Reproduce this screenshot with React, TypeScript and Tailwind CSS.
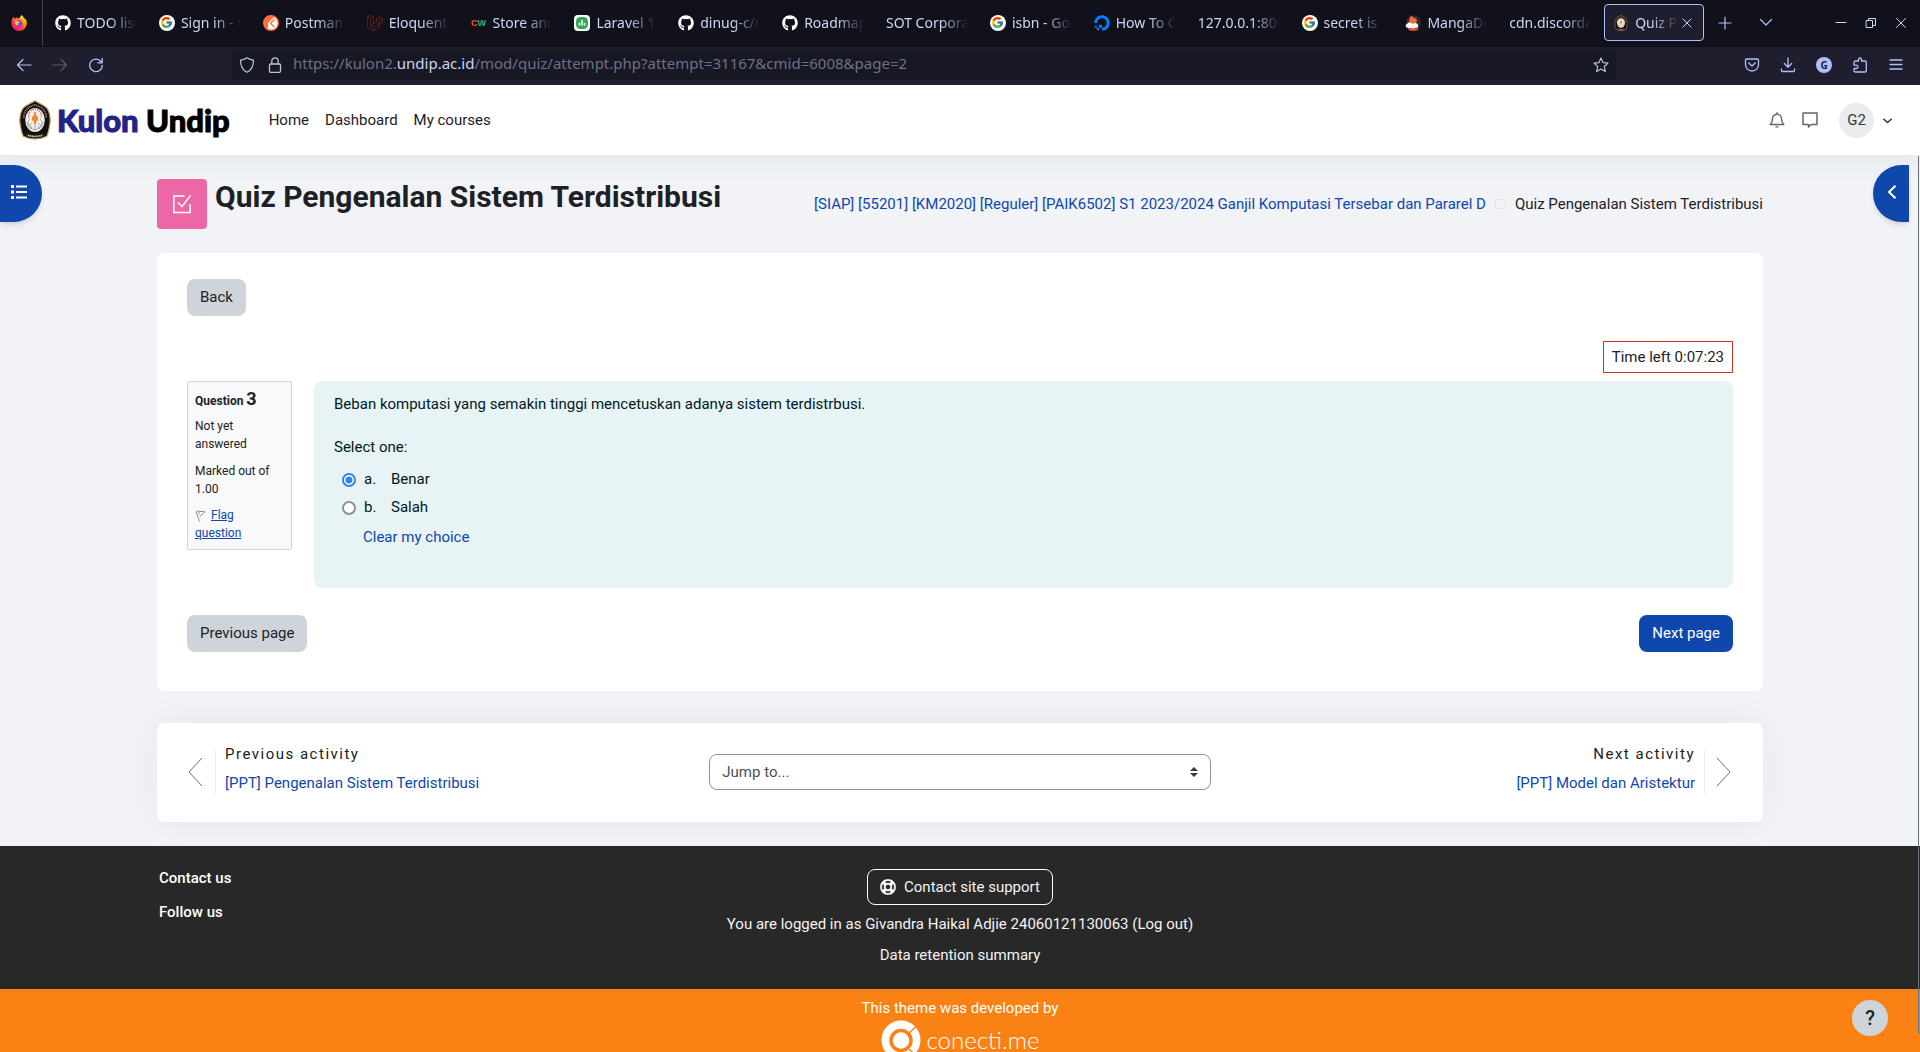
import { useState, type ReactNode } from "react";
import { FaGithub, FaLaravel, FaDigitalOcean, FaRegLifeRing } from "react-icons/fa";
import { FcGoogle } from "react-icons/fc";

/* ---------- browser icons ---------- */

function Stroke({ size, width = 1, children }: { size: number; width?: number; children: ReactNode }) {
  return (
    <svg
      aria-hidden="true"
      width={size}
      height={size}
      viewBox="0 0 16 16"
      fill="none"
      stroke="currentColor"
      strokeWidth={width}
      strokeLinecap="round"
      strokeLinejoin="round"
    >
      {children}
    </svg>
  );
}

function FirefoxIcon() {
  return (
    <svg aria-hidden="true" width="16" height="16" viewBox="0 0 16 16">
      <defs>
        <linearGradient id="fox" x1="0.9" y1="0.05" x2="0.2" y2="0.95">
          <stop offset="0" stopColor="#fff44f" />
          <stop offset="0.35" stopColor="#ff980e" />
          <stop offset="0.7" stopColor="#ff3647" />
          <stop offset="1" stopColor="#e31587" />
        </linearGradient>
      </defs>
      <path
        fill="url(#fox)"
        d="M15.4 5.4c-.4-.8-1-1.7-1.6-2 .4.8.6 1.500.7 2C13.600 3 12 2 10.800.1c-1.400.8-1.900 2.200-2 3-.8 0-1.600.3-2.200.7-.4-.3-.5-1.200-.2-1.700-.8.4-1.400 1-1.800 1.500-.5-.1-.8 0-1 0C3.300 3.200 3 2.500 3 1.800 1.700 2.700.3 5 .3 8.300A7.700 7.700 0 0 0 8 16a7.700 7.700 0 0 0 7.700-6.500c.2-1.400.1-2.900-.3-4.100z"
      />
      <circle cx="7.900" cy="8.500" r="3.300" fill="#7542e5" />
      <path fill="#ffbd4f" d="M3.500 6.200c1.200-.7 3-.5 4 .3 1 .1 1.500.3 1.500.7-.1.500-1.500.7-1.900 1.300-.3.600.2 1.300 1 1.500-1.300.8-3.300.2-4.100-1.200-.4-.8-.6-1.700-.5-2.600z" />
    </svg>
  );
}

function GoogleIcon() {
  return (
    <span className="flex size-4 items-center justify-center rounded-full bg-white">
      <FcGoogle size={13} aria-hidden="true" />
    </span>
  );
}

function PostmanDocIcon() {
  return (
    <svg aria-hidden="true" width="16" height="16" viewBox="0 0 16 16">
      <circle cx="8" cy="8" r="7.300" fill="#fff" stroke="#ff6c37" strokeWidth="1.400" />
      <path d="M11.500 1.500A7 7 0 0 0 1.200 8a6.500 6.500 0 0 0 4 6L5 8z" fill="#ff6c37" />
      <path d="M11.500 4L7.500 8.200l4 4" fill="none" stroke="#ff6c37" strokeWidth="1.300" />
    </svg>
  );
}

function CodeWallIcon() {
  return (
    <span aria-hidden="true" className="flex w-4 justify-center font-['Liberation_Sans'] text-[9px] leading-4 font-bold">
      <span className="text-[#ff4b2b]">C</span>
      <span className="text-[#1fb57a]">W</span>
    </span>
  );
}

function ChartIcon() {
  return (
    <svg aria-hidden="true" width="16" height="16" viewBox="0 0 16 16">
      <rect width="16" height="16" rx="4" fill="#fff" />
      <rect x="2" y="2" width="12" height="12" rx="4.500" fill="#34a853" />
      <path d="M5.500 10.500V7.500M8 10.500V5M10.500 10.500V8" stroke="#fff" strokeWidth="1.500" />
    </svg>
  );
}

function MangaIcon() {
  return (
    <svg aria-hidden="true" width="16" height="16" viewBox="0 0 16 16">
      <circle cx="8.500" cy="7.500" r="7.300" fill="#2c2f33" />
      <path d="M4 7.500c0-2 .8-4.500 2-6.500 1 .2 1.700.8 2.500 1.500 1.500.3 3 1.500 3.500 3l-1.500 3-5 .5z" fill="#ff6740" />
      <path d="M.5 10.500c.8-1.500 2.500-2 3.500-3.200 2 1.500 5.500 1.400 7 .7 1.800 1 2.500 2.300 2 4.300l-5 1.700-6.500-1.500z" fill="#fff" />
      <path d="M2 12.500c3 1.200 8 1 12 .5l-2 2.500c-3 .6-6 .5-8-.3z" fill="#e6502f" />
    </svg>
  );
}

/* University crest: gold-edged dark shield around a pale medallion. */
function Crest({ className }: { className: string }) {
  return (
    <svg aria-hidden="true" className={className} viewBox="0 0 32 40">
      <path
        d="M16 .7C20 3.500 25 4.500 28.500 9c3 5 3.300 11 2 17.500-.6 3.600-1.500 7-2.700 9.700-7 3.700-16.600 3.700-23.600 0-1.200-2.700-2.100-6.100-2.700-9.700C.2 20 .5 14 3.500 9 7 4.500 12 3.500 16 .7z"
        fill="#14110c"
        stroke="#c9a25d"
        strokeWidth="1.200"
      />
      <path d="M4.800 18c0-7 4-11.500 11.200-13 7.200 1.500 11.200 6 11.200 13" fill="none" stroke="#9b9488" strokeWidth="1.800" strokeDasharray="1 .8" />
      <ellipse cx="16" cy="20" rx="9.800" ry="12" fill="#f1efec" />
      <path
        d="M16 21v10M11 19c-3 3-2.500 7 1 9M21 19c3 3 2.500 7-1 9M8 22c1 4.500 4 7.500 8 7.500s7-3 8-7.500M13 23l-3 3M19 23l3 3M13 26l-1.500 3M19 26l1.500 3"
        fill="none"
        stroke="#9a9690"
        strokeWidth=".8"
      />
      <path d="M10 17.500a6.300 6.300 0 1 1 12 0" fill="none" stroke="#ec5a34" strokeWidth="1.300" strokeDasharray="1.300 1" />
      <path d="M16 11.500c1.400 1 1.500 2.300.8 3.500 2.200 1 2.700 3.500 2.200 5.500l-1.500.5-.7 3h-1.600l-.7-3-1.500-.5c-.5-2 0-4.500 2.200-5.500-.7-1.200-.6-2.500.8-3.500z" fill="#ef8a2b" />
      <path d="M6.500 33c6 2.500 13 2.500 19 0l-.8 3c-5.500 2-11.900 2-17.400 0z" fill="#2b2822" />
      <path d="M9 35.300c4.500 1.500 9.500 1.500 14 0" fill="none" stroke="#d8d4cb" strokeWidth="1.500" strokeDasharray="1.300 .6" />
    </svg>
  );
}

/* ---------- browser chrome ---------- */

const github = <FaGithub size={16} className="text-white" aria-hidden="true" />;

const tabs: { title: string; icon?: ReactNode; active?: boolean }[] = [
  { title: "TODO list", icon: github },
  { title: "Sign in - Google", icon: <GoogleIcon /> },
  { title: "Postman", icon: <PostmanDocIcon /> },
  { title: "Eloquent: Getting", icon: <FaLaravel size={16} className="text-[#a3211b]" aria-hidden="true" /> },
  { title: "Store and", icon: <CodeWallIcon /> },
  { title: "Laravel 10", icon: <ChartIcon /> },
  { title: "dinug-c/note", icon: github },
  { title: "Roadmap", icon: github },
  { title: "SOT Corporate" },
  { title: "isbn - Google", icon: <GoogleIcon /> },
  { title: "How To Create", icon: <FaDigitalOcean size={16} className="text-[#0080ff]" aria-hidden="true" /> },
  { title: "127.0.0.1:8000" },
  { title: "secret is not", icon: <GoogleIcon /> },
  { title: "MangaDex", icon: <MangaIcon /> },
  { title: "cdn.discordapp" },
  { title: "Quiz Pengenalan", icon: <Crest className="h-4 w-4" />, active: true },
];

function IconButton({ label, className, children }: { label: string; className: string; children: ReactNode }) {
  return (
    <button type="button" aria-label={label} className={`flex h-full shrink-0 items-center justify-center ${className}`}>
      {children}
    </button>
  );
}

function TabBar() {
  return (
    <div className="flex h-[46px] shrink-0 items-center bg-[#11111b] text-sm text-[#cdd6f4]">
      <IconButton label="Firefox View" className="mr-px w-[43px] border-r border-[#3d3e4c] pr-1">
        <FirefoxIcon />
      </IconButton>
      <div className="flex min-w-0 flex-1 pb-px">
        {tabs.map((tab) => (
          <div key={tab.title} className="min-w-0 flex-1 px-0.5">
            <div
              className={`flex h-[37px] items-center rounded border ${
                tab.active ? "border-[#b4befe] bg-[#1e1e2e]" : "border-transparent"
              }`}
            >
              <button type="button" className="flex h-full min-w-0 flex-1 items-center gap-1.5 px-2">
                {tab.icon && <span className="shrink-0">{tab.icon}</span>}
                <span className="min-w-0 flex-1 overflow-hidden text-left whitespace-nowrap [mask-image:linear-gradient(to_left,transparent,black_28px)]">
                  {tab.title}
                </span>
              </button>
              {tab.active && (
                <button type="button" aria-label="Close tab" className="-ml-2 flex w-6 shrink-0 items-center justify-center pr-2">
                  <Stroke size={16}>
                    <path d="M4 4l8 8M12 4l-8 8" />
                  </Stroke>
                </button>
              )}
            </div>
          </div>
        ))}
      </div>
      <IconButton label="New tab" className="w-[38px] text-[#b4befe]">
        <Stroke size={16} width={1.2}>
          <path d="M8 2v12M2 8h12" />
        </Stroke>
      </IconButton>
      <IconButton label="List all tabs" className="mr-[38px] w-11 text-[#b4befe]">
        <Stroke size={16} width={1.2}>
          <path d="M2.500 4.500L8 10l5.500-5.500" />
        </Stroke>
      </IconButton>
      <IconButton label="Minimize" className="w-[30px]">
        <Stroke size={16}>
          <path d="M3 7.500h10" />
        </Stroke>
      </IconButton>
      <IconButton label="Restore" className="w-[30px]">
        <Stroke size={16}>
          <path d="M3.500 5.500h6v7h-6zM5.500 5.500v-2h7v7h-3" />
        </Stroke>
      </IconButton>
      <IconButton label="Close" className="mr-1 w-[30px]">
        <Stroke size={16}>
          <path d="M3.500 3.500l9 9M12.500 3.500l-9 9" />
        </Stroke>
      </IconButton>
    </div>
  );
}

function Toolbar() {
  return (
    <div className="flex h-[39px] shrink-0 items-center border-t border-[#0e0e17] bg-[#1e1e2e] px-1.5 pb-[3px] text-[#b4befe]">
      <IconButton label="Back" className="w-9">
        <Stroke size={16} width={1.2}>
          <path d="M15 8H1.500M7 2.500L1.500 8 7 13.500" />
        </Stroke>
      </IconButton>
      <IconButton label="Forward" className="w-9 text-[#585b70]">
        <Stroke size={16} width={1.2}>
          <path d="M1 8h13.500M9 2.500L14.500 8 9 13.500" />
        </Stroke>
      </IconButton>
      <IconButton label="Reload" className="w-9">
        <Stroke size={16} width={1.3}>
          <path d="M13 4.500A6.300 6.300 0 1 0 14.300 8.500M14.200 1.500v4.300h-4.300" />
        </Stroke>
      </IconButton>
      <div className="mx-[118px] flex h-[31px] min-w-0 flex-1 items-center rounded bg-[#181825] text-[#bac2de]">
        <button type="button" aria-label="Tracking protection" className="ml-[7px]">
          <Stroke size={16} width={1.2}>
            <path d="M8 .8c2 1.400 4.300 2.200 6.500 2.400C14.500 8.500 12.500 13 8 15.300 3.500 13 1.500 8.500 1.500 3.200 3.700 3 6 2.200 8 .8z" />
          </Stroke>
        </button>
        <button type="button" aria-label="Connection secure" className="ml-3">
          <Stroke size={16} width={1.3}>
            <rect x="2.500" y="7" width="11" height="8.300" rx="1" />
            <path d="M4.800 7V4a3.200 3.200 0 0 1 6.400 0v3" />
          </Stroke>
        </button>
        <p className="ml-2.5 min-w-0 flex-1 truncate pb-0.5 text-[15px] text-[#6c7086]">
          https://kulon2.<span className="text-[#cdd6f4]">undip.ac.id</span>
          /mod/quiz/attempt.php?attempt=31167&amp;cmid=6008&amp;page=2
        </p>
        <button type="button" aria-label="Bookmark this page" className="mr-[7px]">
          <Stroke size={16} width={1.2}>
            <path d="M8 1l2 4.600 5 .5-3.700 3.400 1 5L8 12l-4.300 2.500 1-5L1 6.100l5-.5z" />
          </Stroke>
        </button>
      </div>
      <IconButton label="Save to Pocket" className="w-9">
        <Stroke size={16} width={1.3}>
          <path d="M2.500 2h11a1 1 0 0 1 1 1v4.500a6.500 6.500 0 0 1-13 0V3a1 1 0 0 1 1-1zM4.800 6L8 9l3.200-3" />
        </Stroke>
      </IconButton>
      <IconButton label="Downloads" className="w-9">
        <Stroke size={16} width={1.3}>
          <path d="M8 .8V10M4.300 6.500L8 10.200l3.700-3.700M1.500 12v1.500a1 1 0 0 0 1 1h11a1 1 0 0 0 1-1V12" />
        </Stroke>
      </IconButton>
      <IconButton label="Account" className="w-9">
        <span className="flex size-4 items-center justify-center rounded-full bg-[#b4befe] text-[10px] leading-none font-bold text-[#1e1e2e]">
          G
        </span>
      </IconButton>
      <IconButton label="Extensions" className="w-9">
        <Stroke size={16} width={1.3}>
          <path d="M6.500 4V2.500a1.500 1.500 0 0 1 3 0V4h3.500a1.300 1.300 0 0 1 1.300 1.300v8.400a1.300 1.300 0 0 1-1.300 1.300H3.300A1.300 1.300 0 0 1 2 13.700V11.500h2.300a1.500 1.500 0 0 0 0-3.300H2V5.300A1.300 1.300 0 0 1 3.300 4z" />
        </Stroke>
      </IconButton>
      <IconButton label="Menu" className="w-9">
        <Stroke size={16} width={1.3}>
          <path d="M2 3h12M2 7.500h12M2 12h12" />
        </Stroke>
      </IconButton>
    </div>
  );
}

/* ---------- page ---------- */

function SiteHeader() {
  return (
    <header className="relative z-10 flex h-[70px] items-center bg-white pr-[27px] pl-[19px] text-[15px] shadow-[0_4px_24px_rgba(29,33,37,0.08)]">
      <a href="#home" className="flex items-center gap-1.5 font-[Lato] text-[31px] leading-none font-black">
        <Crest className="h-10 w-8 shrink-0" />
        <span className="text-[#232387] [-webkit-text-stroke:1px_currentColor]">
          Kulon <span className="text-black">Undip</span>
        </span>
      </a>
      <nav className="ml-[39px] flex gap-4">
        <a href="#home">Home</a>
        <a href="#dashboard">Dashboard</a>
        <a href="#courses">My courses</a>
      </nav>
      <div className="ml-auto flex items-center text-[#5f666d]">
        <button type="button" aria-label="Notifications">
          <Stroke size={16} width={1.4}>
            <path d="M8 .8v1.400M1.200 12.500c1.800-1.700 2.300-3.500 2.300-5.500C3.500 4 5.300 2.300 8 2.300S12.500 4 12.500 7c0 2 .5 3.800 2.300 5.500z" />
            <path d="M7 14.900h2" />
          </Stroke>
        </button>
        <button type="button" aria-label="Messages" className="ml-[17px]">
          <Stroke size={16} width={1.5}>
            <path d="M1 1h14v11.500H9L6.500 15v-2.500H1z" />
          </Stroke>
        </button>
        <button type="button" aria-label="User menu" className="ml-[21px] flex items-center text-[#343a40]">
          <span className="flex size-[35px] items-center justify-center rounded-full bg-[#e9ecef]">G2</span>
          <span className="ml-2">
            <Stroke size={11} width={2}>
              <path d="M2.500 6L8 11l5.500-5" />
            </Stroke>
          </span>
        </button>
      </div>
    </header>
  );
}

function QuestionInfo() {
  return (
    <div className="w-[105px] shrink-0 self-start rounded-xs border border-[#ced4da] bg-[#f8f9fa] pt-[5px] pr-3 pb-[7px] pl-[7px] text-xs leading-[18px]">
      <h2 className="leading-[23px] font-bold">
        Question <span className="text-lg leading-[23px]">3</span>
      </h2>
      <p className="mt-1">Not yet answered</p>
      <p className="mt-[9px]">Marked out of 1.00</p>
      <a href="#flag" className="mt-2 block text-[#0f47ad]">
        <svg aria-hidden="true" width="12" height="12" viewBox="0 0 12 12" className="mr-1 inline-block" fill="none" stroke="#8b8f93" strokeWidth="1">
          <path d="M1 1.500L4.500 11.500M2 1c3 .8 5 .3 8 .8L5 6.500M2.500 1.500L5 4" />
        </svg>
        <span className="underline">Flag question</span>
      </a>
    </div>
  );
}

function Question() {
  const [answer, setAnswer] = useState("a");
  const options = [
    { id: "a", label: "Benar" },
    { id: "b", label: "Salah" },
  ];
  return (
    <fieldset className="min-w-0 flex-1 rounded-lg bg-[#e7f3f5] px-5 pt-3 pb-10 text-[#001a1e]">
      <p>Beban komputasi yang semakin tinggi mencetuskan adanya sistem terdistrbusi.</p>
      <p className="mt-[21px]">Select one:</p>
      <div className="mt-2.5 flex flex-col gap-1.5 pl-2">
        {options.map((option) => (
          <label key={option.id} className="flex items-center">
            <input
              type="radio"
              name="answer"
              value={option.id}
              checked={answer === option.id}
              onChange={() => setAnswer(option.id)}
              className="mt-0.5 size-3.5 appearance-none rounded-full border-2 border-[#8f8f9d] bg-white bg-clip-padding checked:border-[#3584e4] checked:bg-[radial-gradient(circle,#3584e4_3px,white_4px)]"
            />
            <span className="ml-2 w-[27px]">{option.id}.</span>
            <span>{option.label}</span>
          </label>
        ))}
      </div>
      <button type="button" onClick={() => setAnswer("")} className="mt-2 ml-[29px] block text-[#0f47ad]">
        Clear my choice
      </button>
    </fieldset>
  );
}

const buttonShape = "block h-[37px] rounded-lg px-[13px] pb-0.5";

function Chevron({ right }: { right?: boolean }) {
  return (
    <svg aria-hidden="true" width="15" height="30" viewBox="0 0 15 30" className="shrink-0" fill="none" stroke="#6a6f75" strokeWidth="1">
      <path d={right ? "M1 1l13 14L1 29" : "M14 1L1 15l13 14"} />
    </svg>
  );
}

function ActivityNav() {
  return (
    <nav className="mt-8 grid h-[99px] grid-cols-3 items-center rounded-lg bg-white px-[30px] pb-0.5 shadow-[0_0_40px_rgba(29,33,37,0.05)]">
      <div className="flex items-center">
        <span className="mr-3 pl-px">
          <Chevron />
        </span>
        <div className="flex h-11 items-center border-l border-[#e9ecef] pl-[9px]">
          <div className="pb-1.5">
            <p className="tracking-widest">Previous activity</p>
            <a href="#previous" className="mt-[7px] block text-[#0f47ad]">
              [PPT] Pengenalan Sistem Terdistribusi
            </a>
          </div>
        </div>
      </div>
      <div className="relative px-[7px]">
        <select
          aria-label="Jump to..."
          className="block h-9 w-full appearance-none rounded-lg border border-[#8f959e] bg-white px-3 text-[#495057]"
        >
          <option>Jump to...</option>
        </select>
        <svg aria-hidden="true" width="8" height="10" viewBox="0 0 8 10" className="pointer-events-none absolute top-[13px] right-5" fill="#343a40">
          <path d="M4 0l4 4H0zM4 10L0 6h8z" />
        </svg>
      </div>
      <div className="flex items-center justify-end text-right">
        <div className="flex h-11 items-center border-r border-[#e9ecef] pr-[9px]">
          <div className="pb-1.5">
            <p className="tracking-widest">Next activity</p>
            <a href="#next" className="mt-[7px] block text-[#0f47ad]">
              [PPT] Model dan Aristektur
            </a>
          </div>
        </div>
        <span className="ml-[11px] pr-0.5">
          <Chevron right />
        </span>
      </div>
    </nav>
  );
}

function SiteFooter() {
  return (
    <footer className="relative text-[15px] leading-[22px] text-white">
      <div className="grid h-[143px] grid-cols-3 bg-[#282828] px-[159px]">
        <div className="pt-[21px] font-medium">
          <p>Contact us</p>
          <p className="mt-3">Follow us</p>
        </div>
        <div className="flex flex-col items-center pt-[23px] text-[#f3f3f3]">
          <button type="button" className="flex h-9 items-center rounded-lg border border-white px-3 whitespace-nowrap">
            <FaRegLifeRing size={16} aria-hidden="true" className="mr-2 text-white" stroke="currentColor" strokeWidth="12" />
            Contact site support
          </button>
          <p className="mt-2 whitespace-nowrap">
            You are logged in as <a href="#profile">Givandra Haikal Adjie 24060121130063</a> (<a href="#logout">Log out</a>)
          </p>
          <a href="#retention" className="mt-[9px]">
            Data retention summary
          </a>
        </div>
      </div>
      <div className="flex h-[90px] flex-col items-center bg-[#fa8214] pt-2">
        <p>This theme was developed by</p>
        <a href="#conectime" className="mt-px flex items-center gap-1.5 font-[Lato] text-2xl leading-none font-light">
          <svg aria-hidden="true" width="40" height="40" viewBox="0 0 40 40">
            <circle cx="20" cy="20" r="19.500" fill="#fff" />
            <circle cx="20" cy="20.500" r="10" fill="#fff" stroke="#fa8214" strokeWidth="3.500" />
            <path d="M28 13l7.500-7M28 29l7 6.500" stroke="#fa8214" strokeWidth="1.500" />
          </svg>
          conecti.me
        </a>
      </div>
    </footer>
  );
}

export default function App() {
  return (
    <div className="flex h-screen flex-col overflow-hidden font-['Noto_Sans',sans-serif]">
      <TabBar />
      <Toolbar />
      <div className="relative min-h-0 flex-1 overflow-hidden bg-[#f1f3f7] font-[Roboto,sans-serif] text-[15px] leading-[22px] text-[#1d2125]">
        <SiteHeader />

        <button
          type="button"
          aria-label="Open course index"
          className="absolute top-20 left-0 z-20 flex h-[57px] w-[42px] items-center rounded-r-full bg-[#0f47ad] pl-[11px] text-white shadow-md"
        >
          <svg aria-hidden="true" width="16" height="14" viewBox="0 0 16 14" className="mb-1" fill="currentColor">
            <path d="M0 0h3v3H0zM5 .5h11v2H5zM0 5.500h3v3H0zM5 6h11v2H5zM0 11h3v3H0zM5 11.500h11v2H5z" />
          </svg>
        </button>
        <button
          type="button"
          aria-label="Open block drawer"
          className="absolute top-20 right-[11px] z-20 flex h-[57px] w-9 items-center rounded-l-full bg-[#0f47ad] pl-[14px] text-white shadow-md"
        >
          <svg aria-hidden="true" width="10" height="14" viewBox="0 0 10 14" className="mb-1" fill="none" stroke="currentColor" strokeWidth="2">
            <path d="M8.500 .8L2 7l6.500 6.200" />
          </svg>
        </button>

        <main className="px-[157px] pt-6 pb-6">
          <div className="flex justify-between">
            <div className="flex gap-2">
              <span className="flex size-[50px] items-center justify-center rounded bg-[#ec67a5]">
                <svg aria-hidden="true" width="20" height="20" viewBox="0 0 20 20" fill="none" stroke="#fff" strokeWidth="1.500">
                  <path d="M12.500 2H1.800v16.500h16.400V10M6 8.500l4 4 8.500-11" />
                </svg>
              </span>
              <h1 className="text-[30px] leading-9 font-bold whitespace-nowrap">Quiz Pengenalan Sistem Terdistribusi</h1>
            </div>
            <nav aria-label="Breadcrumb" className="flex items-center whitespace-nowrap">
              <a href="#course" className="text-[#0f47ad]">
                [SIAP] [55201] [KM2020] [Reguler] [PAIK6502] S1 2023/2024 Ganjil Komputasi Tersebar dan Pararel D
              </a>
              <span aria-hidden="true" className="mx-[9px] h-2.5 w-[11px] border border-[#e3e5e9]" />
              <span>Quiz Pengenalan Sistem Terdistribusi</span>
            </nav>
          </div>

          <section className="mt-6 rounded-lg bg-white px-[30px] pt-[26px] pb-[39px]">
            <button type="button" className={`${buttonShape} bg-[#ced4da]`}>
              Back
            </button>
            <div className="mt-[25px] flex justify-end">
              <p className="border border-[#ca3120] px-2 py-1">Time left 0:07:23</p>
            </div>
            <div className="mt-2 flex gap-[22px]">
              <QuestionInfo />
              <Question />
            </div>
            <div className="mt-[27px] flex justify-between">
              <button type="button" className={`${buttonShape} bg-[#ced4da]`}>
                Previous page
              </button>
              <button type="button" className={`${buttonShape} bg-[#0f47ad] text-white`}>
                Next page
              </button>
            </div>
          </section>

          <ActivityNav />
        </main>

        <SiteFooter />

        <button
          type="button"
          aria-label="Show help"
          className="absolute right-8 bottom-4 z-20 flex size-9 items-center justify-center rounded-full bg-[#ced4da] text-xl font-medium"
        >
          ?
        </button>
        <div aria-hidden="true" className="absolute top-[71px] right-px bottom-[18px] z-20 w-px bg-[#6a737b]" />
      </div>
    </div>
  );
}
